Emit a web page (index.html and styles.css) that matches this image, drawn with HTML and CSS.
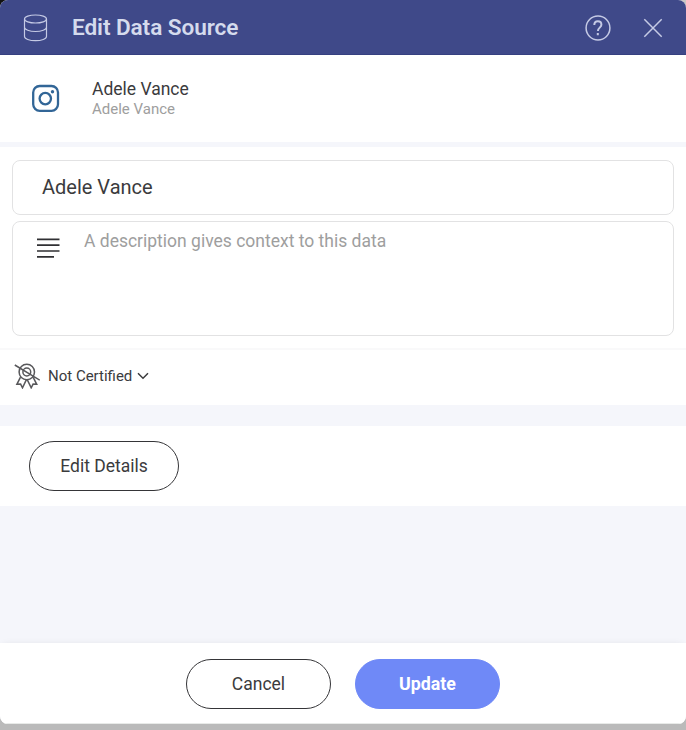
FILE: index.html
```html
<!DOCTYPE html>
<html lang="en">
<head>
<meta charset="utf-8">
<title>Edit Data Source</title>
<link rel="stylesheet" href="styles.css">
</head>
<body>
<div class="dialog">
  <header class="header">
    <svg class="db-icon" width="25" height="28" viewBox="0 0 25 28"><ellipse cx="12.500" cy="5" rx="11" ry="4"/><path d="M1.500 5v17.500c0 2.300 4.900 4.200 11 4.200s11-1.900 11-4.200V5M1.500 13.300c0 2.300 4.900 4.200 11 4.200s11-1.900 11-4.200"/></svg>
    <h1 class="title">Edit Data Source</h1>
    <button class="icon-button help" aria-label="Help"><svg width="26" height="26" viewBox="0 0 26 26"><circle cx="13" cy="13" r="11.900"/><path class="question" d="M9.300 10c0-2.200 1.400-3.700 3.500-3.700s3.600 1.300 3.600 3.400c0 2.900-3.500 3-3.500 6.200"/><path class="question" d="M12.800 18v2.200"/></svg></button>
    <button class="icon-button" aria-label="Close"><svg width="20" height="20" viewBox="0 0 20 20"><path d="M1.300 1.300l17.400 17.400M18.700 1.300L1.300 18.700"/></svg></button>
  </header>
  <section class="source">
    <svg class="camera" width="28" height="28" viewBox="0 0 28 28"><rect x="1.200" y="2" width="24.800" height="24.800" rx="6.500"/><circle cx="13.300" cy="14.600" r="5.700"/><circle class="dot" cx="20.500" cy="7.800" r="1.700"/></svg>
    <div class="source-text"><div class="source-name">Adele Vance</div><div class="source-account">Adele Vance</div></div>
  </section>
  <section class="fields">
    <div class="field name-field">Adele Vance</div>
    <div class="field description-field">
      <svg class="lines" width="23" height="21" viewBox="0 0 23 21"><path d="M0 1.300h22.500M0 7.200h22.500M0 13h22.500M0 18.800h17"/></svg>
      <span>A description gives context to this data</span>
    </div>
  </section>
  <section class="certification">
    <svg class="ribbon" width="26" height="26" viewBox="0 0 26 26"><circle cx="12.800" cy="9" r="7.700"/><circle cx="12.800" cy="9" r="3.900"/><path d="M6.500 14.200L2.900 21.300l3.700-.2 1.900 3.700 3.900-8.100M19.100 14.200l3.600 7.100-3.600-.2-1.900 3.700-4-8.100M.8 2l25 15.200"/></svg>
    <span class="status">Not Certified</span>
    <svg class="chevron" width="12" height="8" viewBox="0 0 12 8"><path d="M1 1.300l5 5 5-5"/></svg>
  </section>
  <section class="details"><button class="button details-button">Edit Details</button></section>
  <div class="filler"></div>
  <footer class="footer"><button class="button">Cancel</button><button class="button primary">Update</button></footer>
</div>
</body>
</html>
```
FILE: styles.css
```css
* { box-sizing: border-box; }
body {
  margin: 0;
  height: 730px;
  overflow: hidden;
  background: linear-gradient(90deg, #111 0 50%, #c9c7c5 50%) top / 100% 20px no-repeat, #bababa;
  font-family: Roboto, "Liberation Sans", sans-serif;
  color: #3b3b3d;
}
.dialog {
  display: flex;
  flex-direction: column;
  height: 724px;
  border-radius: 8px;
  overflow: hidden;
  background: #f5f6fb;
}
svg { display: block; fill: none; stroke: currentColor; flex: none; }
button { font: inherit; color: inherit; cursor: pointer; }
.header {
  display: flex;
  align-items: center;
  height: 55px;
  padding: 1px 23px 0;
  background: #3f4989;
  border-bottom: 1px solid #364080;
  color: #c5cae5;
}
.db-icon { stroke-width: 1.200; }
.title {
  margin: 0 auto 0 24px;
  font-size: 22.600px;
  font-weight: 600;
  line-height: 30px;
  letter-spacing: -0.080px;
  color: #d5dbed;
}
.icon-button { display: block; padding: 0; border: 0; background: none; }
.icon-button svg { stroke-width: 1.500; }
.icon-button .question { stroke-width: 2; }
.help { margin-right: 32px; }
.source { display: flex; height: 87px; padding: 24px 32px; background: #fff; }
.camera { margin-top: 5px; color: #326697; stroke-width: 2.300; }
.camera .dot { fill: currentColor; stroke: none; }
.source-text { margin-left: 32px; }
.source-name { font-size: 17.500px; line-height: 20px; }
.source-account { font-size: 15px; line-height: 20px; color: #9e9e9e; }
.fields {
  display: flex;
  flex-direction: column;
  gap: 6px;
  height: 203px;
  margin-top: 5px;
  padding: 13px 12px 0;
  background: #fff;
  border-bottom: 2px solid #f9f9fa;
}
.field { border: 1px solid #e2e2e3; border-radius: 8px; }
.name-field { height: 55px; padding-left: 29px; font-size: 20px; line-height: 53px; }
.description-field {
  display: flex;
  height: 115px;
  padding: 8px 24px;
  font-size: 17.500px;
  line-height: 22px;
  color: #9e9e9e;
}
.lines { margin: 8px 24px 0 0; color: #303033; stroke-width: 1.700; }
.certification { display: flex; align-items: center; height: 55px; padding: 0 0 3px 14px; background: #fff; }
.ribbon { stroke-width: 1.500; color: #58585b; }
.status { margin: 0 5px 0 8px; font-size: 15px; line-height: 20px; }
.chevron { stroke-width: 1.500; }
.details { height: 80px; margin-top: 21px; padding: 15px 29px; background: #fff; }
.button {
  display: block;
  width: 145px;
  height: 50px;
  padding: 0;
  border: 1px solid #353538;
  border-radius: 25px;
  background: #fff;
  font-size: 17.500px;
  line-height: 22px;
}
.details-button { width: 150px; }
.filler { flex: 1; }
.footer {
  display: flex;
  justify-content: center;
  gap: 24px;
  height: 81px;
  padding-top: 16px;
  background: #fff;
  box-shadow: 0 0 8px -3px rgba(0, 0, 0, .14);
  border-bottom: 1px solid #e8eae8;
}
.primary { border-color: #6f89f7; background: #6f89f7; color: #fff; font-size: 17.800px; font-weight: 700; }
```
